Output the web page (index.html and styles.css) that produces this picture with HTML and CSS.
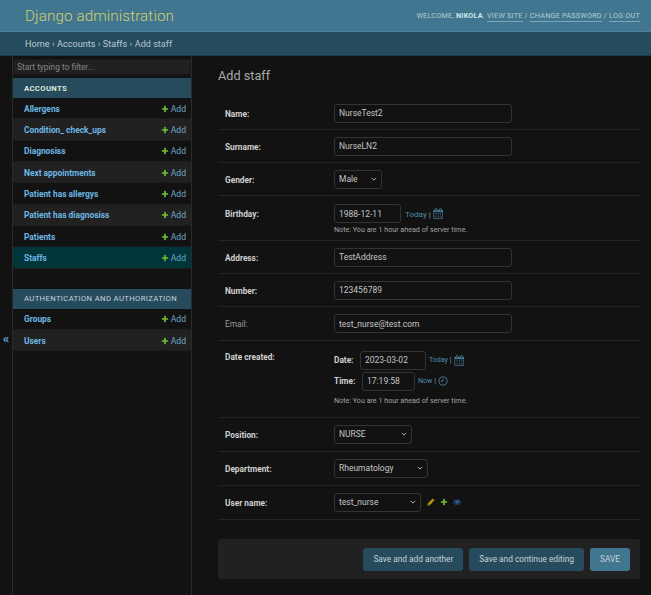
FILE: index.html
```html
<!DOCTYPE html>
<html lang="en">
<head>
<meta charset="utf-8">
<title>Add staff | Django site admin</title>
<link rel="stylesheet" href="styles.css">
</head>
<body>
<svg class="defs" width="0" height="0" aria-hidden="true">
  <symbol id="plus" viewBox="0 0 1792 1792"><path d="M1600 796v192q0 40-28 68t-68 28h-416v416q0 40-28 68t-68 28h-192q-40 0-68-28t-28-68v-416h-416q-40 0-68-28t-28-68v-192q0-40 28-68t68-28h416v-416q0-40 28-68t68-28h192q40 0 68 28t28 68v416h416q40 0 68 28t28 68z"/></symbol>
  <symbol id="calendar" viewBox="0 0 1792 1792"><path d="M192 1664h288v-288h-288v288zm352 0h320v-288h-320v288zm-352-352h288v-320h-288v320zm352 0h320v-320h-320v320zm-352-384h288v-288h-288v288zm736 736h320v-288h-320v288zm-384-736h320v-288h-320v288zm768 736h288v-288h-288v288zm-384-352h320v-320h-320v320zm-352-864v-288q0-13-9.5-22.5t-22.5-9.5h-64q-13 0-22.5 9.5t-9.5 22.5v288q0 13 9.5 22.5t22.5 9.5h64q13 0 22.5-9.5t9.5-22.5zm736 864h288v-320h-288v320zm-384-384h320v-288h-320v288zm384 0h288v-288h-288v288zm32-480v-288q0-13-9.5-22.5t-22.5-9.5h-64q-13 0-22.5 9.5t-9.5 22.5v288q0 13 9.5 22.5t22.5 9.5h64q13 0 22.5-9.5t9.5-22.5zm384-64v1280q0 52-38 90t-90 38h-1408q-52 0-90-38t-38-90v-1280q0-52 38-90t90-38h128v-96q0-66 47-113t113-47h64q66 0 113 47t47 113v96h384v-96q0-66 47-113t113-47h64q66 0 113 47t47 113v96h128q52 0 90 38t38 90z"/></symbol>
</svg>
<header class="topbar">
  <a class="brand" href="#">Django administration</a>
  <div class="usertools">WELCOME, <strong>NIKOLA</strong>. <a href="#">VIEW SITE</a> / <a href="#">CHANGE PASSWORD</a> / <a href="#">LOG OUT</a></div>
</header>
<nav class="crumbs"><a href="#">Home</a><span>›</span><a href="#">Accounts</a><span>›</span><a href="#">Staffs</a><span>›</span><span>Add staff</span></nav>
<div class="main">
  <div class="toggle">«</div>
  <aside class="sidebar">
    <input class="filter" type="text" placeholder="Start typing to filter...">
    <div class="module">
      <div class="caption strong">ACCOUNTS</div>
      <div class="nav-row"><a class="nav-link" href="#">Allergens</a><a class="add" href="#"><svg class="i-add"><use href="#plus"/></svg>Add</a></div>
      <div class="nav-row alt"><a class="nav-link" href="#">Condition_ check_ups</a><a class="add" href="#"><svg class="i-add"><use href="#plus"/></svg>Add</a></div>
      <div class="nav-row"><a class="nav-link" href="#">Diagnosiss</a><a class="add" href="#"><svg class="i-add"><use href="#plus"/></svg>Add</a></div>
      <div class="nav-row alt"><a class="nav-link" href="#">Next appointments</a><a class="add" href="#"><svg class="i-add"><use href="#plus"/></svg>Add</a></div>
      <div class="nav-row"><a class="nav-link" href="#">Patient has allergys</a><a class="add" href="#"><svg class="i-add"><use href="#plus"/></svg>Add</a></div>
      <div class="nav-row alt"><a class="nav-link" href="#">Patient has diagnosiss</a><a class="add" href="#"><svg class="i-add"><use href="#plus"/></svg>Add</a></div>
      <div class="nav-row"><a class="nav-link" href="#">Patients</a><a class="add" href="#"><svg class="i-add"><use href="#plus"/></svg>Add</a></div>
      <div class="nav-row current"><a class="nav-link" href="#">Staffs</a><a class="add" href="#"><svg class="i-add"><use href="#plus"/></svg>Add</a></div>
    </div>
    <div class="module">
      <div class="caption">AUTHENTICATION AND AUTHORIZATION</div>
      <div class="nav-row"><a class="nav-link" href="#">Groups</a><a class="add" href="#"><svg class="i-add"><use href="#plus"/></svg>Add</a></div>
      <div class="nav-row alt"><a class="nav-link" href="#">Users</a><a class="add" href="#"><svg class="i-add"><use href="#plus"/></svg>Add</a></div>
    </div>
  </aside>
  <main class="content">
    <h1 class="title">Add staff</h1>
    <form class="form">
      <div class="row"><label class="label">Name:</label><input class="input wide" value="NurseTest2"></div>
      <div class="row"><label class="label">Surname:</label><input class="input wide" value="NurseLN2"></div>
      <div class="row"><label class="label">Gender:</label><select class="select s-gender"><option>Male</option></select></div>
      <div class="row row-birthday">
        <label class="label">Birthday:</label>
        <div class="stack">
          <div class="inline">
            <input class="input birth" value="1988-12-11">
            <span class="short"><a href="#">Today</a> | <svg class="i-cal"><use href="#calendar"/></svg></span>
          </div>
          <p class="note">Note: You are 1 hour ahead of server time.</p>
        </div>
      </div>
      <div class="row"><label class="label">Address:</label><input class="input wide" value="TestAddress"></div>
      <div class="row"><label class="label">Number:</label><input class="input wide" value="123456789"></div>
      <div class="row"><label class="label optional">Email:</label><input class="input wide" value="test_nurse@test.com"></div>
      <div class="row row-date">
        <label class="label">Date created:</label>
        <div class="stack stack-date">
          <div class="inline"><span class="sublabel">Date:</span><input class="input date" value="2023-03-02"><span class="short small"><a href="#">Today</a> | <svg class="i-cal"><use href="#calendar"/></svg></span></div>
          <div class="inline"><span class="sublabel">Time:</span><input class="input time" value="17:19:58"><span class="short small"><a href="#">Now</a> | <svg class="i-clock" viewBox="0 0 12 12"><circle cx="6" cy="6" r="4.9"/><path d="M6 3v3.2H3.6"/></svg></span></div>
          <p class="note note-date">Note: You are 1 hour ahead of server time.</p>
        </div>
      </div>
      <div class="row row-tall"><label class="label">Position:</label><select class="select s-position"><option>NURSE</option></select></div>
      <div class="row row-tall"><label class="label">Department:</label><select class="select s-dept"><option>Rheumatology</option></select></div>
      <div class="row row-tall">
        <label class="label">User name:</label>
        <select class="select s-user"><option>test_nurse</option></select>
        <span class="related">
          <svg class="i-rel pencil" viewBox="0 0 1792 1792"><path d="M491 1536l91-91-235-235-91 91v107h128v128h107zm523-928q0-22-22-22-10 0-17 7l-542 542q-7 7-7 17 0 22 22 22 10 0 17-7l542-542q7-7 7-17zm-54-192l416 416-832 832h-416v-416zm683 96q0 53-37 90l-166 166-416-416 166-165q36-38 90-38 53 0 91 38l235 234q37 39 37 91z"/></svg>
          <svg class="i-rel"><use href="#plus"/></svg>
          <svg class="i-rel eye" viewBox="0 0 1792 1792"><path d="M1664 960q-152-236-381-353 61 104 61 225 0 185-131.5 316.5t-316.5 131.5-316.5-131.5-131.5-316.5q0-121 61-225-229 117-381 353 133 205 333.5 326.5t434.5 121.5 434.5-121.5 333.5-326.5zm-720-384q0-20-14-34t-34-14q-125 0-214.5 89.5t-89.5 214.5q0 20 14 34t34 14 34-14 14-34q0-86 61-147t147-61q20 0 34-14t14-34zm848 384q0 34-20 69-140 230-376.5 368.5t-499.5 138.5-499.5-139-376.5-368q-20-35-20-69t20-69q140-229 376.5-368t499.5-139 499.5 139 376.5 368q20 35 20 69z"/></svg>
        </span>
      </div>
      <div class="submit">
        <button class="btn" type="button">Save and add another</button>
        <button class="btn" type="button">Save and continue editing</button>
        <button class="btn primary" type="button">SAVE</button>
      </div>
    </form>
  </main>
</div>
</body>
</html>
```
FILE: styles.css
```css
* { box-sizing: border-box; }
html, body { margin: 0; height: 100%; }
body {
  display: flex;
  flex-direction: column;
  height: 595px;
  overflow: hidden;
  background: #121212;
  color: #c8c8c8;
  font-family: Roboto, "Liberation Sans", sans-serif;
  font-size: 8.4px;
  color-scheme: dark;
}
a { text-decoration: none; color: inherit; }
.defs { position: absolute; }

.topbar {
  height: 32px;
  flex: none;
  display: flex;
  align-items: center;
  justify-content: space-between;
  padding: 0 11px 0 25px;
  background: #417690;
  border-bottom: 1px solid #4f8199;
}
.brand { color: #d4cf6c; font-size: 15.2px; font-weight: 300; letter-spacing: 0.12px; }
.usertools { color: #b5d0cc; font-size: 7.2px; letter-spacing: 0.25px; margin-top: -1px; }
.usertools strong { color: #d6e8e6; font-weight: 700; }
.usertools a { border-bottom: 1px solid #7fa6b8; padding-bottom: 1px; }

.crumbs {
  height: 24px;
  flex: none;
  display: flex;
  align-items: center;
  gap: 2.4px;
  padding: 0 0 0 25px;
  background: #264b5d;
  border-bottom: 1px solid #1b3947;
  color: #b4c4cc;
  font-size: 9.1px;
}
.crumbs a { color: #b9ccd4; }

.main { flex: 1; display: flex; min-height: 0; }
.toggle {
  width: 13px;
  flex: none;
  display: flex;
  align-items: center;
  justify-content: center;
  padding-top: 25px;
  color: #5fa6c9;
  font-size: 13px;
  font-weight: 700;
  border-right: 1px solid #2a2a2a;
}
.sidebar {
  width: 179px;
  flex: none;
  padding-top: 3px;
  border-right: 1px solid #2a2a2a;
}
.filter {
  display: block;
  width: 100%;
  height: 16px;
  padding: 0 3px;
  margin-bottom: 3px;
  background: #212121;
  border: 1px solid #1a1a1a;
  color: #aaa;
  font-family: inherit;
  font-size: 8.4px;
  outline: none;
}
.filter::placeholder { color: #858585; }
.module { margin-bottom: 20px; }
.caption {
  height: 20px;
  display: flex;
  align-items: center;
  padding-left: 11px;
  background: #264b5d;
  color: #c4d4da;
  font-size: 7.7px;
  letter-spacing: 0.36px;
  white-space: nowrap;
}
.caption.strong { font-weight: 700; color: #dfe9dc; }
.nav-row {
  height: 21.33px;
  display: flex;
  align-items: center;
  justify-content: space-between;
  padding: 1px 5px 0 11px;
  border-bottom: 1px solid #1c1c1c;
  background: #121212;
}
.nav-row.alt { background: #212121; }
.nav-row.current { background: #00363a; }
.nav-link { color: #6db7e4; font-size: 8.4px; font-weight: 700; }
.add { display: flex; align-items: center; color: #6fa8c6; font-size: 8.6px; }
.i-add { width: 8px; height: 8px; margin-right: 2px; fill: #70bf2b; }

.content { flex: 1; min-width: 0; padding: 9px 11px 0 26px; }
.title {
  margin: 0 0 11px;
  height: 21px;
  line-height: 21px;
  color: #a8a8a8;
  font-size: 12.7px;
  font-weight: 400;
}
.row {
  height: 33.1px;
  display: flex;
  align-items: center;
  padding-left: 7px;
  border-bottom: 1px solid #242424;
}
.row-tall { height: 34px; }
.label { width: 109px; flex: none; padding-top: 1px; color: #d0d0d0; font-size: 8.3px; font-weight: 700; }
.label.optional { color: #9a9a9a; font-weight: 400; }
.input, .select {
  height: 19px;
  padding: 0 4px;
  background-color: #121212;
  border: 1px solid #333;
  border-radius: 3px;
  color: #c4c4c4;
  font-family: inherit;
  font-size: 8.5px;
  outline: none;
}
.select {
  appearance: none;
  background-image: url("data:image/svg+xml,%3Csvg xmlns='http://www.w3.org/2000/svg' viewBox='0 0 8 5'%3E%3Cpath d='M1 1l3 3 3-3' fill='none' stroke='%23c4c4c4' stroke-width='1.2'/%3E%3C/svg%3E");
  background-repeat: no-repeat;
  background-position: right 4px center;
  background-size: 6px 4px;
}
.wide { width: 178px; }
.s-gender { width: 48px; }
.s-position { width: 78px; }
.s-dept { width: 94px; }
.s-user { width: 87px; }
.birth { width: 67px; }
.date { width: 66px; }
.time { width: 53px; }
.row-birthday { height: 45px; align-items: flex-start; padding-top: 8px; }
.row-birthday .label { padding-top: 5px; }
.row-date { height: 77px; align-items: flex-start; padding-top: 10px; }
.stack { display: flex; flex-direction: column; }
.stack-date { gap: 2px; }
.inline { display: flex; align-items: center; }
.sublabel { width: 26px; flex: none; color: #d0d0d0; font-size: 8.3px; font-weight: 700; }
.inline .sublabel + .time { margin-left: 2px; }
.short { display: inline-flex; align-items: center; gap: 2px; margin-left: 4px; color: #a0a0a0; font-size: 8.1px; }
.short.small { font-size: 7px; margin-left: 3px; }
.short a { color: #4f8cab; }
.i-cal { width: 10.5px; height: 11px; fill: #417690; }
.i-clock { width: 10px; height: 10px; fill: none; stroke: #417690; stroke-width: 1.2; }
.note { margin: 2px 0 0; color: #a4a4a4; font-size: 7.15px; }
.note-date { margin-top: 3px; }
.related { display: inline-flex; align-items: center; gap: 5px; margin-left: 6px; }
.i-rel { width: 8px; height: 8px; fill: #70bf2b; }
.pencil { fill: #c99c10; }
.eye { fill: #2b5f9f; }

.submit {
  height: 40px;
  margin-top: 19.5px;
  display: flex;
  align-items: center;
  justify-content: flex-end;
  gap: 6px;
  padding-right: 10px;
  background: #212121;
  border-radius: 3px;
}
.btn {
  height: 23px;
  padding: 0 10px;
  background: #264b5d;
  border: 0;
  border-radius: 3px;
  color: #c4d2d8;
  font-family: inherit;
  font-size: 8.3px;
}
.btn.primary { background: #417690; }
```
